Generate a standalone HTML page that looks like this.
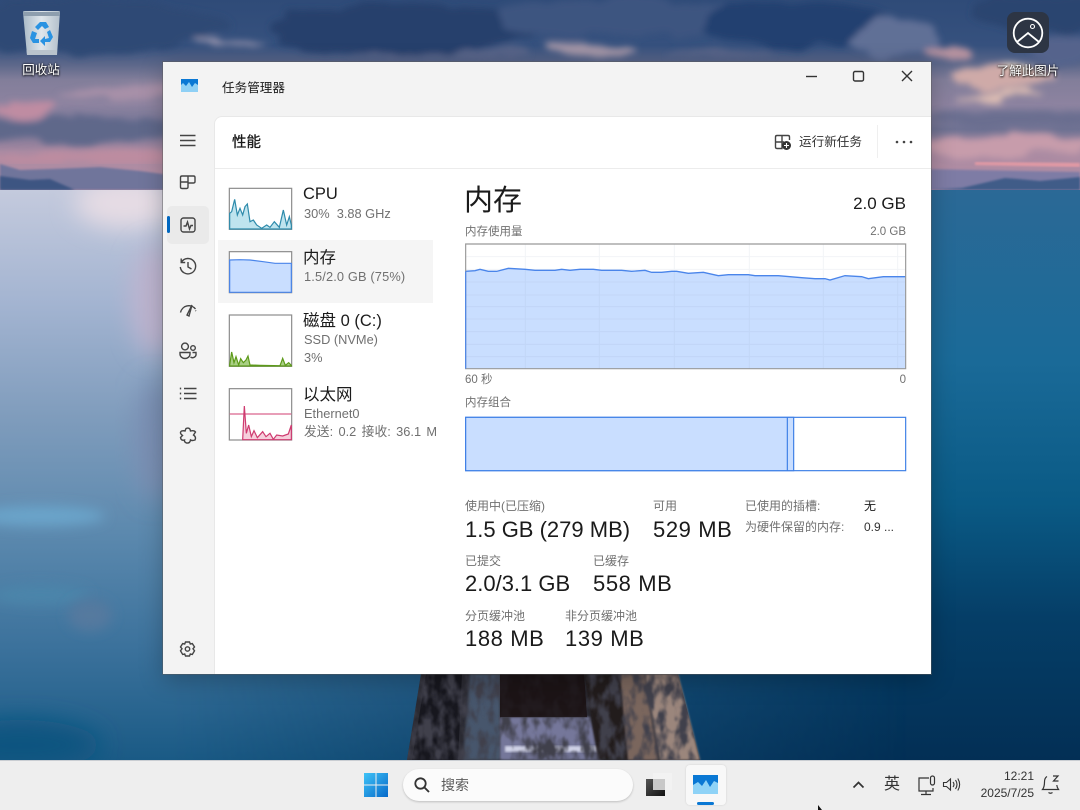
<!DOCTYPE html>
<html lang="zh"><head><meta charset="utf-8"><title>任务管理器</title>
<style>
html,body{margin:0;padding:0;width:1080px;height:810px;overflow:hidden;background:#345}
body{position:relative;font-family:"Liberation Sans","Noto Sans CJK SC",sans-serif;color:#1b1b1b}
svg{position:absolute;display:block}
.t{position:absolute;white-space:nowrap;line-height:20px;height:20px}
.s{color:#707070;font-size:12.8px}
.l{color:#707070;font-size:12px}
.v{font-size:22px;color:#1a1a1a}
.m{letter-spacing:.6px}
.r{text-align:right}
#win{position:absolute;left:163px;top:62px;width:768px;height:612px;background:#f3f3f3;box-shadow:0 0 0 1px rgba(90,90,90,.45),0 6px 22px rgba(0,0,0,.25)}
#content{position:absolute;left:214px;top:116px;width:717px;height:558px;background:#fff;border-top-left-radius:8px;border-top:1px solid #e8e8e8;border-left:1px solid #e8e8e8;box-sizing:border-box}
#bar{position:absolute;left:0;top:760px;width:1080px;height:50px;background:#eeeeee;border-top:1px solid #c9cdd2;box-sizing:border-box}
.d{color:#fff;font-size:12.5px;text-shadow:0 1px 2px #000,0 0 2px rgba(0,0,0,.8)}
</style></head><body>

<svg width="1080" height="810" viewBox="0 0 1080 810" style="left:0;top:0">
<defs>
<linearGradient id="sky" x1="0" y1="0" x2="0" y2="1"><stop offset="0" stop-color="#2f4b78"/><stop offset=".24" stop-color="#36517e"/><stop offset=".34" stop-color="#5c678a"/><stop offset=".42" stop-color="#827e9a"/><stop offset=".55" stop-color="#8d83a0"/><stop offset=".68" stop-color="#6f7293"/><stop offset=".8" stop-color="#a98aa2"/><stop offset="1" stop-color="#b88fa4"/></linearGradient>
<linearGradient id="wr" x1="0" y1="0" x2="0" y2="1"><stop offset="0" stop-color="#2b6996"/><stop offset=".3" stop-color="#1a6a98"/><stop offset=".55" stop-color="#0a5a85"/><stop offset=".75" stop-color="#053e67"/><stop offset="1" stop-color="#032f55"/></linearGradient>
<linearGradient id="wl" x1="0" y1="0" x2="0" y2="1"><stop offset="0" stop-color="#c4cadd"/><stop offset=".2" stop-color="#a3b4d1"/><stop offset=".4" stop-color="#7f9cbc"/><stop offset=".6" stop-color="#5c89ae"/><stop offset=".8" stop-color="#3c729c"/><stop offset="1" stop-color="#1a5a85"/></linearGradient>
<linearGradient id="h" x1="0" y1="0" x2="1" y2="0"><stop offset="0" stop-color="#fff"/><stop offset=".16" stop-color="#fff"/><stop offset=".5" stop-color="#777"/><stop offset=".84" stop-color="#000"/></linearGradient>
<mask id="m"><rect x="0" y="190" width="1080" height="570" fill="url(#h)"/></mask>
<filter id="b3" x="-30%" y="-60%" width="160%" height="220%"><feGaussianBlur stdDeviation="3"/></filter>
<filter id="b6" x="-30%" y="-80%" width="160%" height="260%"><feGaussianBlur stdDeviation="6"/></filter>
<filter id="b12" x="-40%" y="-100%" width="180%" height="300%"><feGaussianBlur stdDeviation="12"/></filter>
<filter id="b1"><feGaussianBlur stdDeviation="1"/></filter>
<filter id="cl" x="0" y="0" width="100%" height="100%"><feTurbulence type="fractalNoise" baseFrequency=".018 .05" numOctaves="3" seed="7" result="n"/><feDisplacementMap in="SourceGraphic" in2="n" scale="24" xChannelSelector="R" yChannelSelector="G"/><feGaussianBlur stdDeviation="3.5"/></filter>
<filter id="wood" x="0" y="0" width="100%" height="100%"><feTurbulence type="fractalNoise" baseFrequency=".09 .05" numOctaves="3" seed="3"/><feColorMatrix values="0 0 0 0 .05  0 0 0 0 .05  0 0 0 0 .07  3.5 0 0 0 -1.4"/><feGaussianBlur stdDeviation=".7"/></filter>
<clipPath id="skyc"><rect width="1080" height="190"/></clipPath>
<clipPath id="wat"><rect y="190" width="1080" height="570"/></clipPath>
<clipPath id="dk"><path d="M421 674 L678 674 L700 760 L407 760Z"/></clipPath>
</defs>

<rect width="1080" height="190" fill="url(#sky)"/>
<g clip-path="url(#skyc)">
<g filter="url(#cl)">
<ellipse cx="60" cy="25" rx="170" ry="26" fill="#2f4a74"/>
<ellipse cx="400" cy="30" rx="130" ry="24" fill="#253f6c"/>
<ellipse cx="620" cy="18" rx="120" ry="20" fill="#3d5580"/>
<ellipse cx="800" cy="25" rx="100" ry="22" fill="#24406f"/>
<ellipse cx="1040" cy="12" rx="70" ry="18" fill="#2b4570"/>
<ellipse cx="895" cy="38" rx="42" ry="22" fill="#606f96"/>
<ellipse cx="230" cy="44" rx="42" ry="3.5" fill="#8f8ea8"/>
<ellipse cx="590" cy="50" rx="48" ry="8" fill="#a294a6"/>
<ellipse cx="440" cy="56" rx="90" ry="5" fill="#566488"/>
<ellipse cx="720" cy="55" rx="50" ry="5" fill="#566488"/>
<ellipse cx="945" cy="52" rx="26" ry="6" fill="#b6929f"/>
<ellipse cx="125" cy="92" rx="65" ry="8" fill="#a790a8"/>
<ellipse cx="22" cy="108" rx="28" ry="8" fill="#bf8ca2"/>
<ellipse cx="70" cy="130" rx="115" ry="13" fill="#5f688a"/>
<ellipse cx="90" cy="158" rx="110" ry="6" fill="#bd8ca0"/>
<ellipse cx="1005" cy="78" rx="50" ry="12" fill="#cfaaa8"/>
<ellipse cx="1020" cy="70" rx="18" ry="5" fill="#f2e0c8"/>
<ellipse cx="1000" cy="96" rx="45" ry="4" fill="#dcbcb2"/>
<ellipse cx="1065" cy="48" rx="30" ry="16" fill="#55648c"/>
<ellipse cx="1030" cy="118" rx="105" ry="7" fill="#6a6e90"/>
<ellipse cx="1010" cy="146" rx="90" ry="12" fill="#c79cab"/>
</g>
<path d="M925 169 L1080 172 L1080 190 L925 190Z" fill="#7e7ba5" filter="url(#b1)"/>
<path d="M975 165 L1080 167 L1080 163 L975 162Z" fill="#e39aa4" filter="url(#b1)"/>
<path d="M930 190 L962 188 L1005 178 L1018 179 L1040 181 L1080 177 L1080 190Z" fill="#3f5c88" filter="url(#b1)"/>
<path d="M0 164 L20 170 L50 169 L100 167 L140 171 L170 175 L170 190 L0 190Z" fill="#70749b" filter="url(#b1)"/>
<path d="M0 176 L30 180 L50 179 L75 190 L0 190Z" fill="#3e5582" filter="url(#b1)"/>
</g>

<rect y="190" width="1080" height="570" fill="url(#wr)"/>
<rect y="190" width="1080" height="570" fill="url(#wl)" mask="url(#m)"/>
<g clip-path="url(#wat)">
<ellipse cx="125" cy="203" rx="50" ry="25" fill="#e6dce4" filter="url(#b12)"/>
<ellipse cx="155" cy="300" rx="25" ry="55" fill="#bdb4cf" filter="url(#b12)"/>
<ellipse cx="40" cy="516" rx="65" ry="10" fill="#6ba4ca" filter="url(#b6)"/>
<ellipse cx="40" cy="595" rx="50" ry="10" fill="#4b85aa" filter="url(#b6)"/>
<ellipse cx="90" cy="615" rx="22" ry="16" fill="#55799f" filter="url(#b6)"/>
<ellipse cx="155" cy="440" rx="22" ry="60" fill="#7a8fb3" filter="url(#b12)"/>
<ellipse cx="20" cy="745" rx="80" ry="25" fill="#0f5480" filter="url(#b12)"/>
</g>

<!-- dock -->
<path d="M421 674 L678 674 L700 760 L407 760Z" fill="#2a2a32"/>
<path d="M426 674 L462 674 L458 760 L412 760Z" fill="#17171e"/>
<path d="M470 674 L500 674 L500 760 L463 760Z" fill="#46566c" filter="url(#b1)"/>
<path d="M500 674 L584 674 L587 718 L500 718Z" fill="#1c1416"/>
<path d="M500 717 L590 717 L602 760 L500 760Z" fill="#75779a" filter="url(#b1)"/>
<path d="M505 746 L600 746 L602 752 L505 752Z" fill="#cfd2e6" filter="url(#b1)"/>
<path d="M584 674 L620 674 L628 760 L598 760Z" fill="#201a1e" filter="url(#b1)"/>
<path d="M620 674 L645 674 L658 760 L628 760Z" fill="#7a665d" filter="url(#b1)"/>
<path d="M645 674 L678 674 L700 760 L660 760Z" fill="#9b867b" filter="url(#b1)"/>
<g clip-path="url(#dk)"><rect x="405" y="674" width="300" height="86" filter="url(#wood)"/></g>
<path d="M500 674 L584 674 L587 717 L500 717Z" fill="#1c1416" opacity=".85"/>
</svg>

<!-- recycle bin -->
<svg width="50" height="52" viewBox="0 0 50 52" style="left:17px;top:8px">
<defs><linearGradient id="bin" x1="0" x2="1"><stop offset="0" stop-color="#a9bac7"/><stop offset=".5" stop-color="#dfe6ec"/><stop offset="1" stop-color="#b3c0cb"/></linearGradient></defs>
<path d="M6 4 Q6 3 8 3 L41 3 Q43 3 43 4 L40 47 L10 47Z" fill="url(#bin)"/>
<path d="M6 4 L43 4 L42.5 8 L6.5 8Z" fill="#8d9eae"/>
<path d="M9.5 42 L40 42 L39.7 47 L10 47Z" fill="#b9c3cc"/>
<path d="M18 19 L23 14 L29 14 L32 19 L28 21 L25 18 L21 22Z M33 22 L36 29 L33 34 L28 34 L28 38 L23 33 L28 28 L28 31 L32 30 L30 24Z M15 23 L20 25 L18 31 L22 31 L22 35 L16 35 L13 30Z" fill="#2a93e2"/>
</svg>
<div class="t d" style="left:11px;top:60px;width:60px;text-align:center">回收站</div>

<!-- learn icon -->
<svg width="44" height="44" viewBox="0 0 44 44" style="left:1006px;top:11px">
<rect x="1" y="1" width="42" height="41" rx="8" fill="#2d3544"/>
<circle cx="22" cy="22" r="14.3" fill="none" stroke="#fff" stroke-width="1.8"/>
<path d="M11 31 L22 22 L33 31" fill="none" stroke="#fff" stroke-width="1.8"/>
<circle cx="26.5" cy="15.5" r="2" fill="none" stroke="#fff" stroke-width="1.1"/>
</svg>
<div class="t d" style="left:988px;top:61px;width:80px;text-align:center">了解此图片</div>

<div id="win"></div>
<div id="content"></div>
<div style="position:absolute;left:215px;top:168px;width:716px;height:1px;background:#ececec"></div>
<div style="position:absolute;left:877px;top:125px;width:1px;height:33px;background:#efefef"></div>
<div style="position:absolute;left:167px;top:206px;width:42px;height:38px;background:#eaeaea;border-radius:5px"></div>
<div style="position:absolute;left:167px;top:216px;width:3px;height:17px;background:#0067c0;border-radius:2px"></div>
<div style="position:absolute;left:218px;top:240px;width:215px;height:63px;background:#f5f5f5"></div>

<!-- all line icons in page coordinates -->
<svg width="1080" height="810" viewBox="0 0 1080 810" style="left:0;top:0">
<rect x="181" y="79" width="17" height="13" fill="#8fd0f5"/>
<path d="M181 79 H198 V85 L195 83 L192 87 L189 82 L186 86 L183 83 L181 85Z" fill="#0a78d4"/>
<g fill="none" stroke="#444" stroke-width="1.4">
<path d="M806 76.5 H817" stroke="#333"/>
<rect x="853.5" y="71.5" width="10" height="9.5" rx="1.5" stroke="#333"/>
<path d="M902 71 L912 81 M912 71 L902 81" stroke="#333"/>
<path d="M180 135.5 H195.5 M180 140.5 H195.5 M180 145.5 H195.5"/>
<path d="M188 176 H182 Q180.5 176 180.5 177.5 V187 Q180.5 188.5 182 188.5 H186.5 Q188 188.5 188 187 V176 M180.5 182 H188 M188 176 H193.5 Q195 176 195 177.5 V181.5 Q195 183 193.5 183 H188" />
<rect x="181" y="218" width="14" height="14" rx="2.5"/>
<path d="M183.5 226 H186 L187.5 222 L189.5 229 L191 225.5 H193"/>
<path d="M181.5 262 A7.7 7.7 0 1 1 180.3 267 M181.2 258.5 V262.5 H185.2 M188 262 V267 L191.5 269"/>
<path d="M180.5 312.5 A8.5 8.5 0 0 1 195.5 309 M195.5 310.5 L196 311 M192 305 L187 315 L189 316 L192 305"/>
<circle cx="185" cy="346.5" r="3.4"/><circle cx="193" cy="348" r="2.3"/>
<path d="M180 352.5 H190 V354 A5 4.5 0 0 1 180 354Z M192.5 352.5 H196 V353.5 A3.5 3.5 0 0 1 190.5 357"/>
<path d="M184 388.5 H196.5 M184 393.5 H196.5 M184 398.5 H196.5"/>
<path d="M179.8 388.5 H181.2 M179.8 393.5 H181.2 M179.8 398.5 H181.2" stroke-width="1.8"/>
<path d="M186 428.5 Q190 427 190.5 431 Q194 430 195.5 432 L193.5 435 Q196.5 437 195 440 Q192 441 190.5 440 Q190 443.5 186.5 443 Q184 442 184.5 440 Q181 441 180.5 437.5 L182.5 435.5 Q179 433 181.5 431 Q184 430.5 185 431 Z"/>
<circle cx="187.5" cy="649" r="2.2"/>
<path d="M185.5 642 H189.5 L190.3 644 L192.3 643.5 L194.5 647 L193 648.8 L194.5 650.8 L192.3 654.5 L190.3 654 L189.5 656 H185.5 L184.7 654 L182.7 654.5 L180.5 650.8 L182 648.8 L180.5 647 L182.7 643.5 L184.7 644Z"/>
<path d="M783 135.5 H777 Q775.5 135.5 775.5 137 V147 Q775.5 148.5 777 148.5 H782 V135.5 M775.5 142 H782 M783 135.5 H788 Q789.5 135.5 789.5 137 V140 M782 142 H784"/>
</g>
<circle cx="786.5" cy="145.5" r="4.5" fill="#333"/>
<path d="M784 145.5 H789 M786.5 143 V148" stroke="#fff" stroke-width="1.1"/>
<circle cx="897" cy="142" r="1.3" fill="#444"/><circle cx="904" cy="142" r="1.3" fill="#444"/><circle cx="911" cy="142" r="1.3" fill="#444"/>
</svg>

<!-- side-list mini charts (coords = 3x) -->
<svg width="290" height="290" viewBox="0 0 870 870" style="left:160px;top:170px">
<g stroke-width="3.6">
<rect x="208" y="55" width="187" height="123" fill="#fff" stroke="#8d8d8d"/>
<path d="M209 130 L215 125 L224 88 L232 135 L240 115 L248 135 L255 110 L262 102 L270 155 L280 150 L290 165 L305 175 L320 165 L330 172 L343 155 L358 172 L370 120 L380 165 L388 140 L394 165 V177 H209Z" fill="#bfe4ee" stroke="#2e8bab"/>
<rect x="208" y="245" width="187" height="123" fill="#fff" stroke="#8d8d8d"/>
<path d="M209 270 L240 269 L270 270 L310 275 L345 280 L394 280 V367 H209Z" fill="#c9deff" stroke="#4a85ea"/>
<rect x="208" y="435" width="187" height="154" fill="#fff" stroke="#8d8d8d"/>
<path d="M209 585 L215 546 L222 578 L228 560 L236 585 L242 566 L250 578 L258 570 L264 558 L270 585 L300 586 L360 587 L368 565 L376 586 L386 578 L394 586 V588 H209Z" fill="#a9cf84" stroke="#5d9a1a"/>
<rect x="208" y="656" width="187" height="154" fill="#fff" stroke="#8d8d8d"/>
<path d="M209 732 H394" stroke="#d9638e" fill="none"/>
<path d="M248 809 L253 708 L259 790 L266 765 L274 800 L282 782 L292 803 L308 785 L318 800 L330 790 L340 808 L350 795 L368 798 L385 792 L394 765 V809Z" fill="#f6cfdc" stroke="#cf3b70"/>
</g>
</svg>

<!-- main charts (coords = 3x) -->
<svg width="480" height="300" viewBox="0 0 1440 900" style="left:455px;top:180px">
<rect x="32" y="192" width="1320" height="374" fill="#fff"/>
<path d="M31 274 L60 272 L75 268 L100 274 L125 274 L160 265 L210 268 L240 271 L300 271 L320 268 L345 271 L375 268 L415 268 L440 271 L500 271 L530 274 L570 271 L590 277 L620 277 L650 274 L665 274 L700 280 L745 277 L790 287 L820 284 L880 284 L900 287 L970 287 L1040 293 L1080 296 L1110 296 L1125 300 L1170 287 L1220 290 L1240 296 L1285 290 L1352 290 V566 H31Z" fill="#c9deff"/>
<path d="M211 192 V566 M433 192 V566 M658 192 V566 M883 192 V566 M1105 192 V566 M1328 192 V566 M32 230 H1352 M32 268 H1352 M32 306 H1352 M32 345 H1352 M32 380 H1352 M32 417 H1352 M32 455 H1352 M32 493 H1352 M32 530 H1352" stroke="#8a9bb5" stroke-opacity=".11" stroke-width="3" fill="none"/>
<path d="M31 274 L60 272 L75 268 L100 274 L125 274 L160 265 L210 268 L240 271 L300 271 L320 268 L345 271 L375 268 L415 268 L440 271 L500 271 L530 274 L570 271 L590 277 L620 277 L650 274 L665 274 L700 280 L745 277 L790 287 L820 284 L880 284 L900 287 L970 287 L1040 293 L1080 296 L1110 296 L1125 300 L1170 287 L1220 290 L1240 296 L1285 290 L1352 290" fill="none" stroke="#4a85ea" stroke-width="4"/>
<path d="M32 192 H1352 V566 H32Z" fill="none" stroke="#999" stroke-width="3.5"/>
<path d="M32 274 V566" stroke="#4a85ea" stroke-width="3.5"/>
<rect x="32" y="712" width="1320" height="160" fill="#fff" stroke="#3d7fe6" stroke-width="3.5"/>
<rect x="32" y="712" width="984" height="160" fill="#c9deff" stroke="#3d7fe6" stroke-width="3.5"/>
<path d="M997 712 V872" stroke="#3d7fe6" stroke-width="3.5"/>
</svg>

<div class="t" style="left:222px;top:78px;font-size:12.6px">任务管理器</div>
<div class="t" style="left:232px;top:133px;font-size:14.5px;-webkit-text-stroke:.3px #1b1b1b">性能</div>
<div class="t" style="left:799px;top:132px;font-size:12.6px;color:#333">运行新任务</div>

<div class="t" style="left:303px;top:184px;font-size:16.5px">CPU</div>
<div class="t s" style="left:304px;top:204px">30%&nbsp; 3.88 GHz</div>
<div class="t" style="left:303px;top:248px;font-size:16.5px">内存</div>
<div class="t s" style="left:304px;top:267px;letter-spacing:.15px">1.5/2.0 GB (75%)</div>
<div class="t" style="left:303px;top:311px;font-size:16.5px">磁盘 0 (C:)</div>
<div class="t s" style="left:304px;top:330px">SSD (NVMe)</div>
<div class="t s" style="left:304px;top:348px">3%</div>
<div class="t" style="left:303px;top:385px;font-size:16.5px">以太网</div>
<div class="t s" style="left:304px;top:404px">Ethernet0</div>
<div class="t s" style="left:304px;top:422px;word-spacing:1.8px">发送: 0.2 接收: 36.1 M</div>

<div class="t" style="left:464px;top:191px;font-size:29px">内存</div>
<div class="t r" style="right:174px;top:194px;font-size:17px">2.0 GB</div>
<div class="t l" style="left:465px;top:222px;font-size:11.5px">内存使用量</div>
<div class="t l r" style="right:174px;top:222px;font-size:11.5px">2.0 GB</div>
<div class="t l" style="left:465px;top:370px;font-size:11.5px">60 秒</div>
<div class="t l r" style="right:174px;top:370px;font-size:11.5px">0</div>
<div class="t l" style="left:465px;top:393px;font-size:11.5px">内存组合</div>

<div class="t l" style="left:465px;top:496px">使用中(已压缩)</div>
<div class="t v" style="left:465px;top:520px">1.5 GB (279 MB)</div>
<div class="t l" style="left:653px;top:496px">可用</div>
<div class="t v m" style="left:653px;top:520px">529 MB</div>
<div class="t l" style="left:745px;top:496px">已使用的插槽:</div>
<div class="t" style="left:864px;top:496px;font-size:12px">无</div>
<div class="t l" style="left:745px;top:517px">为硬件保留的内存:</div>
<div class="t" style="left:864px;top:517px;font-size:12px;color:#333">0.9 ...</div>
<div class="t l" style="left:465px;top:551px">已提交</div>
<div class="t v" style="left:465px;top:574px">2.0/3.1 GB</div>
<div class="t l" style="left:593px;top:551px">已缓存</div>
<div class="t v m" style="left:593px;top:574px">558 MB</div>
<div class="t l" style="left:465px;top:606px">分页缓冲池</div>
<div class="t v m" style="left:465px;top:629px">188 MB</div>
<div class="t l" style="left:565px;top:606px">非分页缓冲池</div>
<div class="t v m" style="left:565px;top:629px">139 MB</div>

<!-- taskbar -->
<div id="bar"></div>
<div style="position:absolute;left:403px;top:769px;width:230px;height:32px;border-radius:16px;background:#fbfbfb;box-shadow:0 1px 2px rgba(0,0,0,.2)"></div>
<div style="position:absolute;left:686px;top:765px;width:40px;height:40px;border-radius:4px;background:#f8f8f8;box-shadow:0 0 2px rgba(0,0,0,.12)"></div>
<svg width="1080" height="50" viewBox="0 760 1080 50" style="left:0;top:760px">
<defs><linearGradient id="w1" x1="0" y1="0" x2="1" y2="1"><stop offset="0" stop-color="#3fc3f7"/><stop offset="1" stop-color="#0669c9"/></linearGradient>
<linearGradient id="tv" x1="0" y1="0" x2="1" y2="1"><stop offset="0" stop-color="#555"/><stop offset="1" stop-color="#111"/></linearGradient></defs>
<path d="M364 773 H375.5 V784.5 H364Z M376.5 773 H388 V784.5 H376.5Z M364 785.5 H375.5 V797 H364Z M376.5 785.5 H388 V797 H376.5Z" fill="url(#w1)"/>
<circle cx="420.5" cy="783.5" r="5.2" fill="none" stroke="#333" stroke-width="1.8"/>
<path d="M424.5 787.5 L429 792" stroke="#333" stroke-width="1.9"/>
<rect x="653" y="773" width="19" height="17" fill="#f2f2f2"/>
<rect x="646" y="779" width="19" height="17" fill="url(#tv)"/>
<rect x="653" y="779" width="12" height="11" fill="#c8c8c8"/>
<rect x="693" y="775" width="25" height="19" fill="#8fd3f7"/>
<path d="M693 775 H718 V783 L714 781 L710 787 L706 780 L702 786 L698 782 L693 785Z" fill="#0a78d4"/>
<rect x="697" y="802" width="17" height="3" rx="1.5" fill="#0a78d4"/>
<g fill="none" stroke="#333" stroke-width="1.4">
<path d="M853.5 787.5 L858.5 782.5 L863.5 787.5" stroke-width="1.7"/>
<path d="M929 778 H919 V791 H933 V788 M921 794.5 H931 M926 791 V794.5" stroke-width="1.2"/>
<rect x="930.5" y="776" width="4" height="9" rx="2" stroke-width="1.2"/>
<path d="M943.5 782.5 H946.5 L950.5 779 V790 L946.5 786.5 H943.5Z M953 782 Q955 784.5 953 787 M955.5 780 Q958.5 784.5 955.5 789 M957.8 778.5 Q961.5 784.5 957.8 790.5" stroke-width="1.1"/>
<path d="M1047 776.5 Q1044.5 778 1044.5 782 Q1044.5 787 1042.5 789.5 H1058.5 Q1057 787.5 1056.8 785 M1048.5 792.5 Q1050.5 794 1052.5 792.5 M1053 776 H1058 L1053.5 781 H1058.5" stroke-width="1.2"/>
</g>
<path d="M818 805 L818 810 L822 810Z" fill="#111"/>
</svg>
<div class="t" style="left:441px;top:775px;font-size:14px;color:#5c5c5c">搜索</div>
<div class="t" style="left:884px;top:775px;font-size:16px;color:#333">英</div>
<div class="t r" style="right:46px;top:766px;font-size:12px;color:#333">12:21</div>
<div class="t r" style="right:46px;top:783px;font-size:12px;color:#333">2025/7/25</div>
</body></html>
